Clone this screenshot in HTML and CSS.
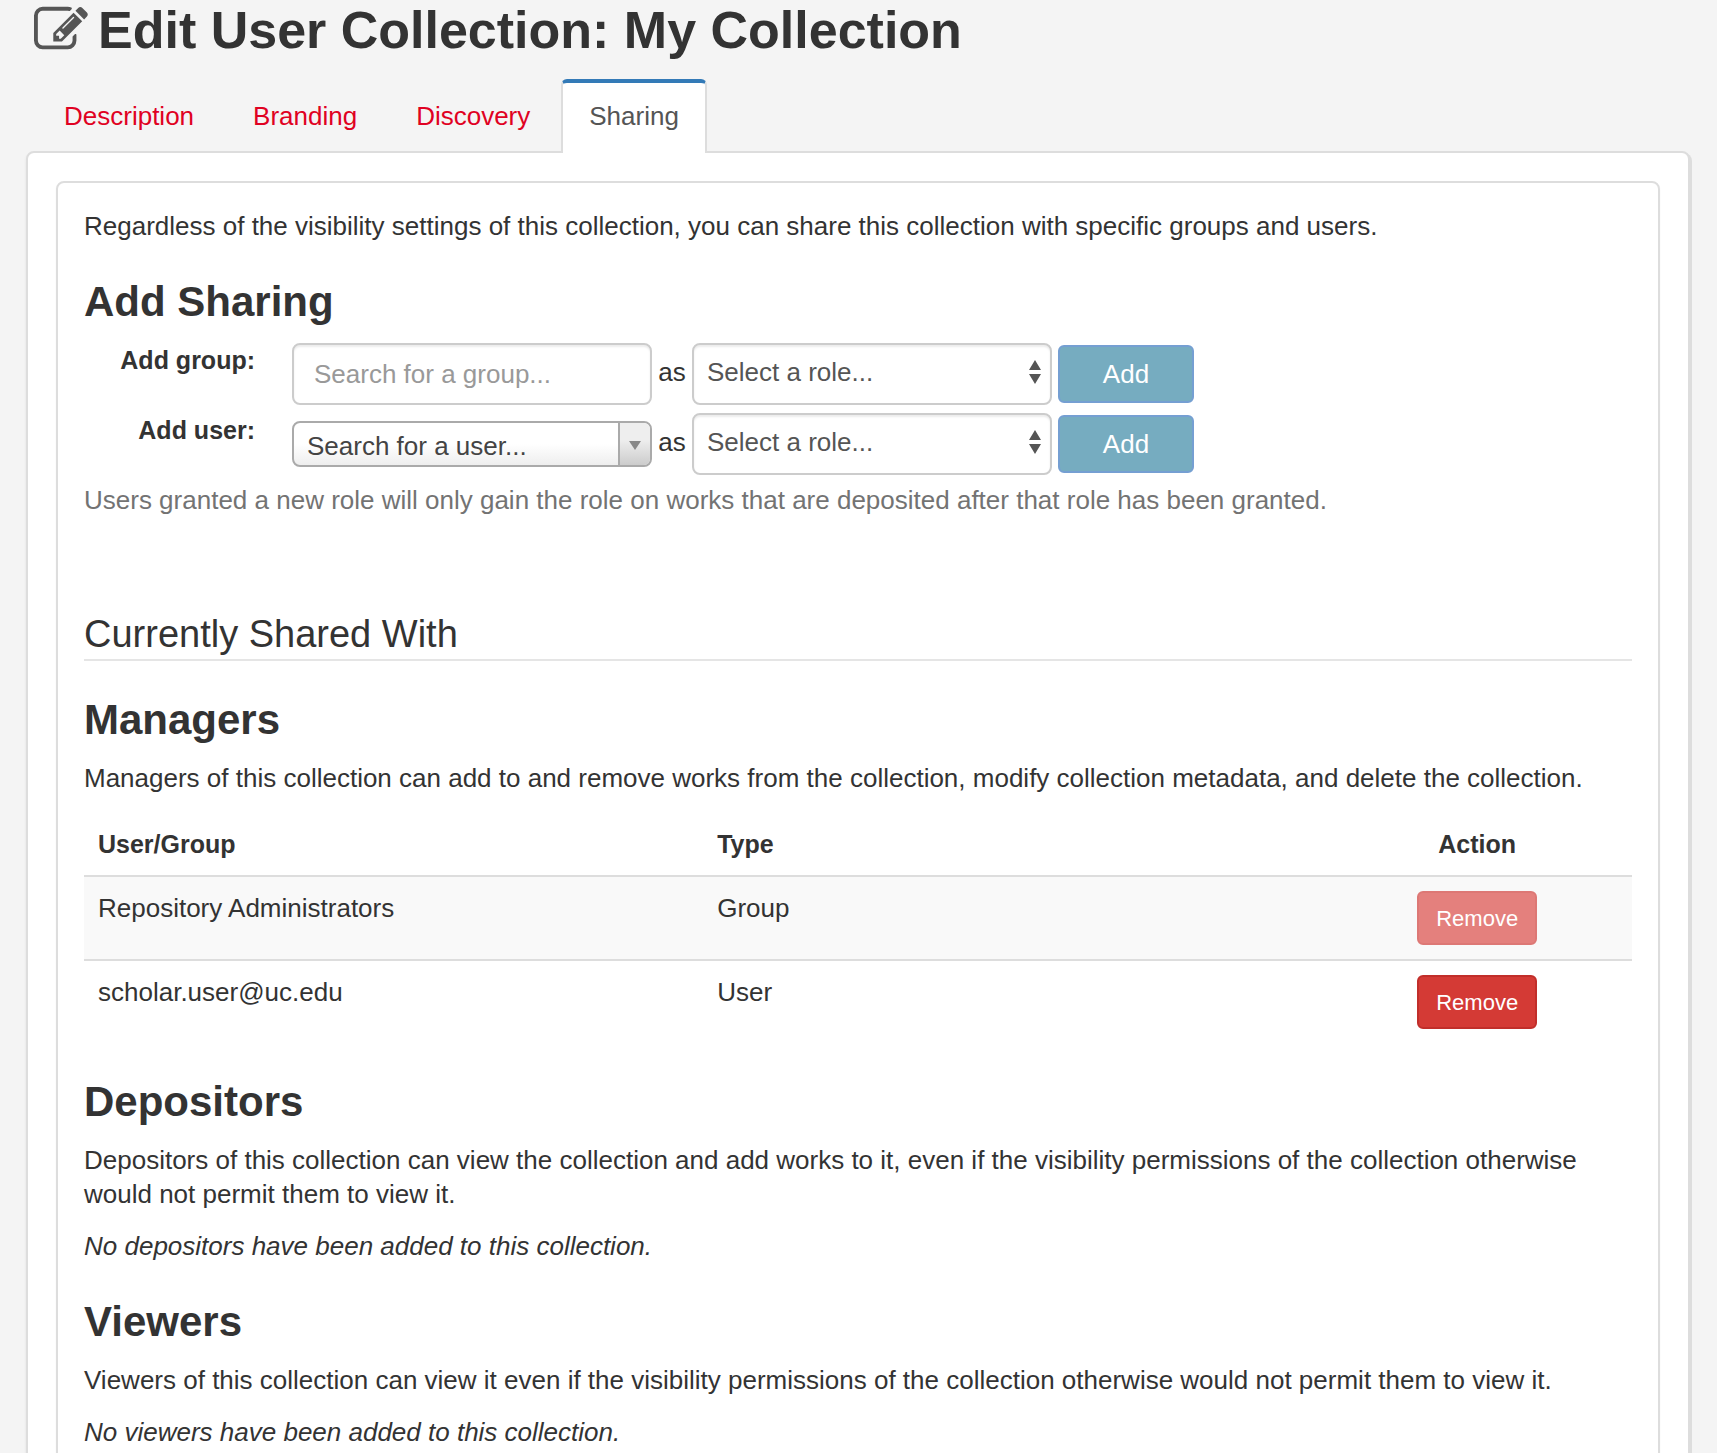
FILE: index.html
```html
<!DOCTYPE html>
<html lang="en">
<head>
<meta charset="utf-8">
<meta name="viewport" content="width=device-width, initial-scale=1">
<title>Edit User Collection: My Collection</title>
<link rel="stylesheet" href="styles.css">
</head>
<body>
<main class="page">
  <h1 class="page-title">
    <svg class="page-icon" viewBox="0 0 1792 1792" aria-hidden="true"><path d="M888 1184l116-116-152-152-116 116v56h96v96h56zm440-720q-16-16-33 1l-350 350q-17 17-1 33t33-1l350-350q17-17 1-33zm80 594v190q0 119-84.500 203.500t-203.500 84.500h-832q-119 0-203.500-84.500t-84.500-203.500v-832q0-119 84.500-203.500t203.500-84.500h832q63 0 117 25 15 7 18 23 3 17-9 29l-49 49q-14 14-32 8-23-6-45-6h-832q-66 0-113 47t-47 113v832q0 66 47 113t113 47h832q66 0 113-47t47-113v-126q0-13 9-22l64-64q15-15 35-7t20 29zm-96-738l288 288-672 672h-288v-288zm444 132l-92 92-288-288 92-92q28-28 68-28t68 28l152 152q28 28 28 68t-28 68z"/></svg>
    <span>Edit User Collection: My Collection</span>
  </h1>

  <nav class="tabs" aria-label="Collection settings">
    <a class="tab" href="#description">Description</a>
    <a class="tab" href="#branding">Branding</a>
    <a class="tab" href="#discovery">Discovery</a>
    <a class="tab tab-active" href="#sharing" aria-current="page">Sharing</a>
  </nav>

  <div class="tab-panel" id="sharing">
    <div class="card">
      <p class="text">Regardless of the visibility settings of this collection, you can share this collection with specific groups and users.</p>

      <section class="section">
        <h2 class="heading">Add Sharing</h2>
        <form class="share-row">
          <label class="share-label" for="group">Add group:</label>
          <input class="field" id="group" type="text" placeholder="Search for a group...">
          <label class="share-as" for="group-role">as</label>
          <span class="role">
            <select class="role-select" id="group-role"><option>Select a role...</option></select>
            <svg class="role-arrows" viewBox="0 0 12 24" aria-hidden="true"><path d="M6 0L12 10H0zM6 24L0 14H12z"/></svg>
          </span>
          <button class="btn btn-add" type="button">Add</button>
        </form>
        <form class="share-row">
          <label class="share-label" for="user">Add user:</label>
          <span class="user">
            <select class="user-select" id="user"><option>Search for a user...</option></select>
            <span class="user-arrow"><svg class="user-triangle" viewBox="0 0 12 9" aria-hidden="true"><path d="M0 0H12L6 9z"/></svg></span>
          </span>
          <label class="share-as" for="user-role">as</label>
          <span class="role">
            <select class="role-select" id="user-role"><option>Select a role...</option></select>
            <svg class="role-arrows" viewBox="0 0 12 24" aria-hidden="true"><path d="M6 0L12 10H0zM6 24L0 14H12z"/></svg>
          </span>
          <button class="btn btn-add" type="button">Add</button>
        </form>
        <p class="text text-muted">Users granted a new role will only gain the role on works that are deposited after that role has been granted.</p>
      </section>

      <h2 class="legend">Currently Shared With</h2>

      <section class="section">
        <h3 class="heading">Managers</h3>
        <p class="text">Managers of this collection can add to and remove works from the collection, modify collection metadata, and delete the collection.</p>
        <table class="table">
          <thead>
            <tr><th class="col-wide">User/Group</th><th class="col-wide">Type</th><th class="col-action">Action</th></tr>
          </thead>
          <tbody>
            <tr><td>Repository Administrators</td><td>Group</td><td class="col-action"><button class="btn btn-remove" type="button" disabled>Remove</button></td></tr>
            <tr><td>scholar.user@uc.edu</td><td>User</td><td class="col-action"><button class="btn btn-remove" type="button">Remove</button></td></tr>
          </tbody>
        </table>
      </section>

      <section class="section">
        <h3 class="heading">Depositors</h3>
        <p class="text">Depositors of this collection can view the collection and add works to it, even if the visibility permissions of the collection otherwise would not permit them to view it.</p>
        <p class="text"><em>No depositors have been added to this collection.</em></p>
      </section>

      <section class="section">
        <h3 class="heading">Viewers</h3>
        <p class="text">Viewers of this collection can view it even if the visibility permissions of the collection otherwise would not permit them to view it.</p>
        <p class="text"><em>No viewers have been added to this collection.</em></p>
      </section>
    </div>
  </div>
</main>
</body>
</html>
```
FILE: styles.css
```css
* {
  box-sizing: border-box;
}

body {
  margin: 0;
  background: #f4f4f4;
  color: #333;
  font: 26px/34px "Liberation Sans", Arial, sans-serif;
}

button,
input,
select {
  margin: 0;
  font: inherit;
}

.page {
  padding: 0 27px 0 26px;
}

.page-title {
  display: flex;
  align-items: center;
  gap: 10px;
  margin: 0;
  padding-left: 8px;
  font-size: 52px;
  font-weight: 700;
  line-height: 60px;
}

.page-icon {
  width: 54px;
  height: 54px;
  fill: #555;
}

.tabs {
  display: flex;
  gap: 3px;
  margin-top: 19px;
  padding-left: 10px;
}

.tab {
  padding: 16px 26px 18px;
  border: 2px solid transparent;
  border-top-width: 4px;
  border-bottom: 0;
  border-radius: 6px 6px 0 0;
  color: #e00122;
  text-decoration: none;
}

.tab-active {
  z-index: 1;
  margin-bottom: -2px;
  padding-bottom: 20px;
  border-color: #337ab7 #ddd;
  background: #fff;
  color: #555;
}

.tab-panel {
  padding: 28px;
  border: 2px solid #ddd;
  border-radius: 8px;
  background: #fff;
  box-shadow: 2px 2px 0 #ddd, 0 2px 3px rgba(0, 0, 0, 0.08);
}

.card {
  padding: 26px 26px 32px;
  border: 2px solid #ddd;
  border-radius: 8px;
  box-shadow: 0 2px 2px rgba(0, 0, 0, 0.05);
}

.text {
  margin: 0 0 18px;
}

.text-muted {
  color: #737373;
}

.section {
  padding-top: 16px;
}

.heading {
  margin: 0;
  padding-bottom: 16px;
  font-size: 42px;
  font-weight: 700;
  line-height: 50px;
}

.share-row {
  display: grid;
  grid-template-columns: 202px 360px 28px 360px 136px;
  column-gap: 6px;
  align-items: center;
  margin-bottom: 8px;
}

.share-label {
  align-self: start;
  padding-right: 31px;
  font-size: 25px;
  font-weight: 700;
  text-align: right;
}

.share-as {
  padding-bottom: 4px;
  text-align: center;
}

.field {
  height: 62px;
  padding: 0 20px;
  border: 2px solid #ccc;
  border-radius: 8px;
  background: #fff;
  box-shadow: inset 0 2px 2px rgba(0, 0, 0, 0.08);
  color: #555;
}

.field::placeholder {
  color: #999;
  opacity: 1;
}

.role,
.user {
  display: grid;
  align-items: center;
}

.role > *,
.user > * {
  grid-area: 1 / 1;
}

.role-select {
  height: 62px;
  padding: 0 40px 4px 13px;
  border: 2px solid #ccc;
  border-radius: 8px;
  appearance: none;
  background: #fff;
  box-shadow: inset 0 2px 2px rgba(0, 0, 0, 0.08);
  color: #555;
}

.role-arrows {
  justify-self: end;
  width: 12px;
  height: 24px;
  margin: 0 11px 4px 0;
  fill: #555;
  pointer-events: none;
}

.user-select {
  height: 46px;
  padding: 4px 40px 0 13px;
  border: 2px solid #aaa;
  border-radius: 8px;
  appearance: none;
  background: linear-gradient(to top, #eee 0%, #fff 50%);
  color: #444;
}

.user-arrow {
  display: grid;
  place-items: center;
  justify-self: end;
  width: 32px;
  height: 42px;
  margin-right: 2px;
  padding-top: 2px;
  border-left: 2px solid #aaa;
  border-radius: 0 6px 6px 0;
  background: linear-gradient(to top, #ccc 0%, #eee 60%);
  pointer-events: none;
}

.user-triangle {
  width: 12px;
  height: 9px;
  fill: #888;
}

.btn {
  border: 2px solid;
  border-radius: 6px;
  color: #fff;
}

.btn-add {
  height: 58px;
  border-color: #759fd2;
  background: #76acc0;
}

.btn-remove {
  height: 54px;
  padding: 2px 17px 0;
  border-color: #c12e2a;
  background: #d43a35;
  font-size: 22px;
}

.btn-remove:disabled {
  border-color: #dd7875;
  background: #e4807d;
}

.legend {
  margin: 95px 0 18px;
  padding-bottom: 3px;
  border-bottom: 2px solid #e5e5e5;
  font-size: 38px;
  font-weight: 400;
  line-height: 44px;
}

.table {
  width: 100%;
  border-collapse: collapse;
  margin-bottom: 18px;
}

.table th,
.table td {
  padding: 14px;
  text-align: left;
  vertical-align: top;
}

.table th {
  font-size: 25px;
}

.table td {
  border-top: 2px solid #ddd;
}

.table tbody tr:first-child {
  background: #f9f9f9;
}

.col-wide {
  width: 40%;
}

.table .col-action {
  text-align: center;
}

.table .btn {
  display: block;
  margin: 0 auto;
}
```
